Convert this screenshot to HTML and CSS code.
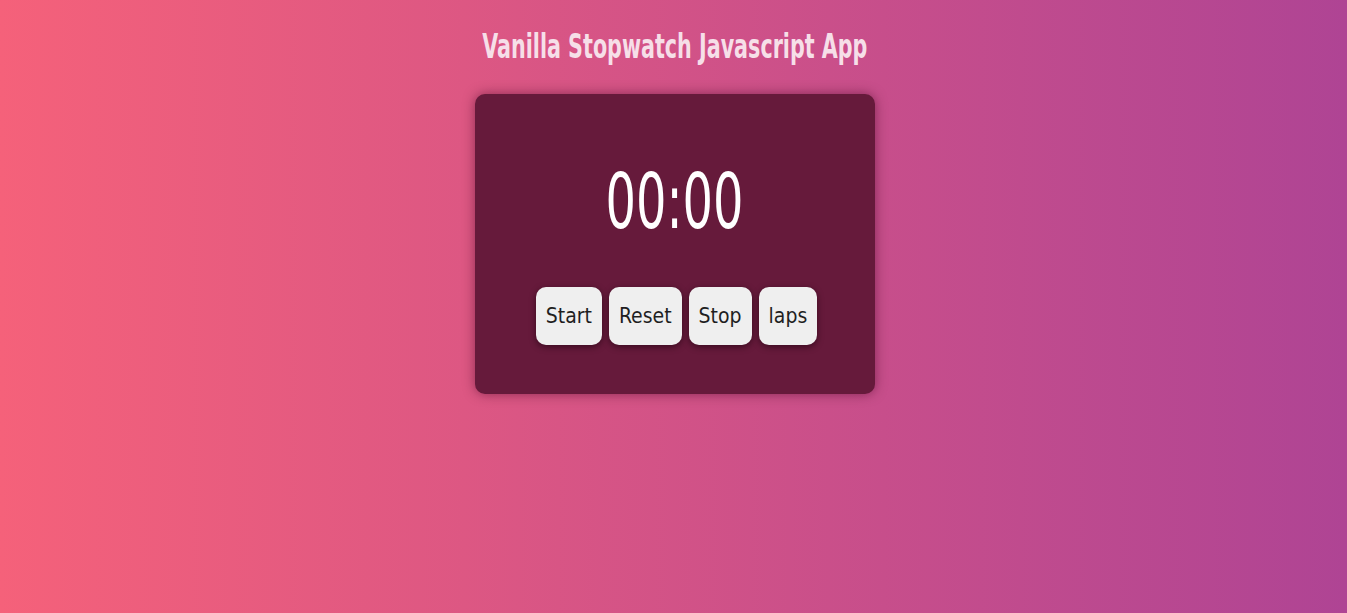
FILE: index.html
```html
<!DOCTYPE html>
<html lang="en">
<head>
<meta charset="utf-8">
<title>Vanilla Stopwatch</title>
<link rel="stylesheet" href="styles.css">
</head>
<body>
<main class="page">
  <h1 class="title"><span class="narrow">Vanilla Stopwatch Javascript App</span></h1>
  <section class="card">
    <div class="time"><span class="narrow">00:00</span></div>
    <div class="controls">
      <button class="btn">Start</button>
      <button class="btn">Reset</button>
      <button class="btn">Stop</button>
      <button class="btn">laps</button>
    </div>
  </section>
</main>
</body>
</html>
```
FILE: styles.css
```css
html, body {
  margin: 0;
  height: 100%;
}
body {
  background: linear-gradient(to right, #f5617a, #af4494);
  font-family: "DejaVu Sans Condensed", "DejaVu Sans", sans-serif;
  font-stretch: condensed;
}
.page {
  display: flex;
  flex-direction: column;
  align-items: center;
  padding-top: 26px;
  padding-left: 2px;
}
.narrow {
  display: inline-block;
  transform: scaleX(0.676);
}
.title {
  margin: 0;
  font-size: 34px;
  font-weight: 700;
  line-height: 40px;
  color: #f6dfe8;
}
.card {
  margin-top: 28px;
  width: 400px;
  height: 300px;
  box-sizing: border-box;
  background: #661a3b;
  border-radius: 10px;
  box-shadow: 0 0 12px rgba(60, 0, 30, 0.5);
  display: flex;
  flex-direction: column;
  align-items: center;
  padding-top: 68px;
}
.time {
  color: #ffffff;
  font-size: 76px;
  line-height: 80px;
}
.time .narrow {
  transform: scaleX(0.7);
}
.controls {
  margin-top: 45px;
  display: flex;
  gap: 7px;
  padding-left: 4px;
}
.btn {
  height: 58px;
  padding: 0 10px;
  border: none;
  border-radius: 10px;
  background: #efefef;
  color: #1f1f1f;
  font-family: inherit;
  font-stretch: condensed;
  font-size: 21px;
  box-shadow: 0 2px 6px rgba(30, 0, 15, 0.6);
}
```
